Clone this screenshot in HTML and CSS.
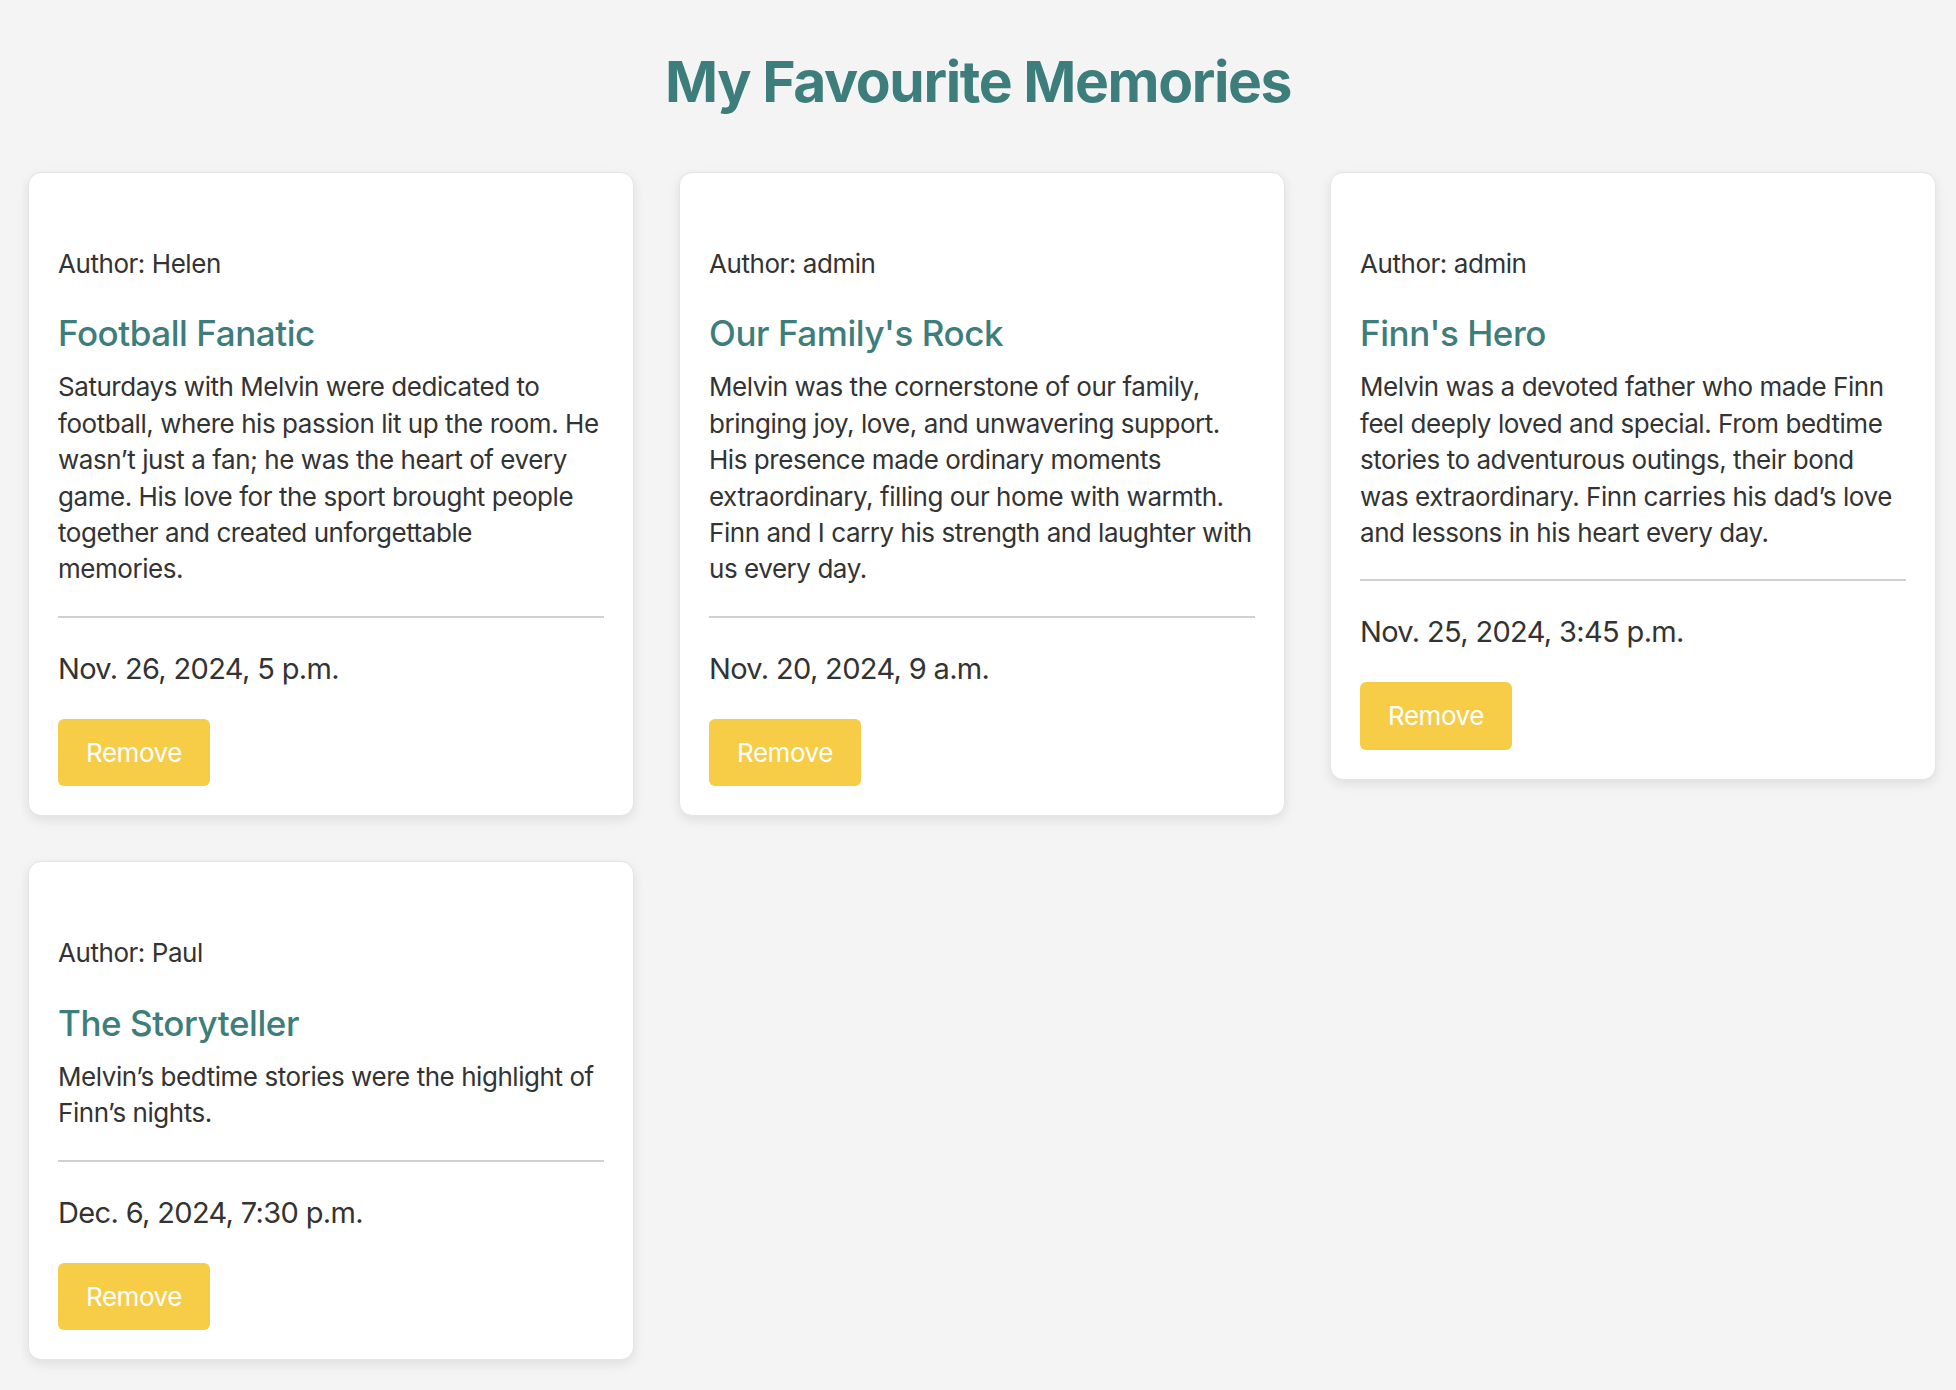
FILE: index.html
```html
<!DOCTYPE html>
<html lang="en">
<head>
<meta charset="utf-8">
<title>My Favourite Memories</title>
<link rel="stylesheet" href="styles.css">
</head>
<body>
  <h1 class="page-title">My Favourite Memories</h1>
  <main class="memory-grid">
    <article class="memory-card">
      <p class="memory-author">Author: Helen</p>
      <h2 class="memory-title">Football Fanatic</h2>
      <p class="memory-text">Saturdays with Melvin were dedicated to football, where his passion lit up the room. He wasn’t just a fan; he was the heart of every game. His love for the sport brought people together and created unforgettable<br>memories.</p>
      <hr class="memory-divider">
      <p class="memory-date">Nov. 26, 2024, 5 p.m.</p>
      <button class="remove-btn" type="button">Remove</button>
    </article>
    <article class="memory-card">
      <p class="memory-author">Author: admin</p>
      <h2 class="memory-title">Our Family's Rock</h2>
      <p class="memory-text">Melvin was the cornerstone of our family, bringing joy, love, and unwavering support. His presence made ordinary moments extraordinary, filling our home with warmth. Finn and I carry his strength and laughter with us every day.</p>
      <hr class="memory-divider">
      <p class="memory-date">Nov. 20, 2024, 9 a.m.</p>
      <button class="remove-btn" type="button">Remove</button>
    </article>
    <article class="memory-card">
      <p class="memory-author">Author: admin</p>
      <h2 class="memory-title">Finn's Hero</h2>
      <p class="memory-text">Melvin was a devoted father who made Finn feel deeply loved and special. From bedtime stories to adventurous outings, their bond was extraordinary. Finn carries his dad’s love and lessons in his heart every day.</p>
      <hr class="memory-divider">
      <p class="memory-date">Nov. 25, 2024, 3:45 p.m.</p>
      <button class="remove-btn" type="button">Remove</button>
    </article>
    <article class="memory-card">
      <p class="memory-author">Author: Paul</p>
      <h2 class="memory-title">The Storyteller</h2>
      <p class="memory-text">Melvin’s bedtime stories were the highlight of Finn’s nights.</p>
      <hr class="memory-divider">
      <p class="memory-date">Dec. 6, 2024, 7:30 p.m.</p>
      <button class="remove-btn" type="button">Remove</button>
    </article>
  </main>
</body>
</html>
```

FILE: styles.css
```css
* {
  box-sizing: border-box;
}

body {
  margin: 0;
  background: #f4f4f4;
  font-family: Inter, "Noto Sans", "Liberation Sans", sans-serif;
  color: #333333;
}

.page-title {
  margin: 46px 0 54px;
  text-align: center;
  font-size: 57px;
  line-height: 72px;
  font-weight: 700;
  letter-spacing: -1.4px;
  color: #3d7e7c;
}

.memory-grid {
  display: grid;
  grid-template-columns: repeat(3, 1fr);
  gap: 45px;
  align-items: start;
  padding: 0 20px 40px 28px;
}

.memory-card {
  background: #ffffff;
  border: 1px solid #e4e4e4;
  border-radius: 13px;
  padding: 29px;
  box-shadow: 0 4px 12px rgba(0, 0, 0, 0.09);
}

.memory-author {
  margin: 44px 0 30px;
  font-size: 26px;
  line-height: 36.4px;
  letter-spacing: -0.45px;
}

.memory-title {
  margin: 0 0 14px;
  font-size: 35px;
  line-height: 43px;
  font-weight: 500;
  letter-spacing: -0.45px;
  color: #3d7e7c;
}

.memory-text {
  margin: 0;
  font-size: 26px;
  line-height: 36.4px;
  letter-spacing: -0.45px;
}

.memory-divider {
  margin: 28px 0 31px;
  border: 0;
  border-top: 2px solid #d0d0d0;
}

.memory-date {
  margin: 0 0 30px;
  font-size: 29px;
  line-height: 40px;
  letter-spacing: -0.65px;
}

.remove-btn {
  display: block;
  border: 0;
  border-radius: 6px;
  padding: 18px 28px;
  background: #f7cd47;
  color: #ffffff;
  font-family: inherit;
  font-size: 26px;
  line-height: 31.5px;
  letter-spacing: -0.45px;
  cursor: pointer;
}
```
